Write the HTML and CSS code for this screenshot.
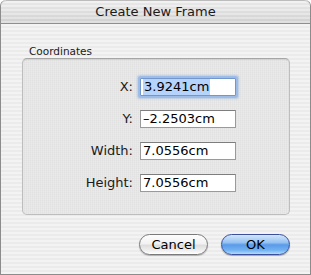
FILE: index.html
```html
<!DOCTYPE html>
<html>
<head>
<meta charset="utf-8">
<link rel="stylesheet" href="styles.css">
</head>
<body>
<div class="window">
  <div class="titlebar">Create New Frame</div>
  <div class="content">
    <div class="group-label">Coordinates</div>
    <div class="groupbox">
      <div class="form">
        <label class="lbl">X:</label>
        <div class="field focused"><span class="sel">3.9241cm</span></div>
        <label class="lbl">Y:</label>
        <div class="field">–2.2503cm</div>
        <label class="lbl">Width:</label>
        <div class="field">7.0556cm</div>
        <label class="lbl">Height:</label>
        <div class="field">7.0556cm</div>
      </div>
    </div>
    <div class="buttons">
      <div class="btn cancel">Cancel</div>
      <div class="btn ok">OK</div>
    </div>
  </div>
</div>
</body>
</html>
```
FILE: styles.css
```css
html, body {
  margin: 0;
  padding: 0;
  background: #ffffff;
}
body {
  font-family: "DejaVu Sans", "Liberation Sans", sans-serif;
  font-size: 13px;
  color: #000;
}
.window {
  width: 311px;
  height: 275px;
  box-sizing: border-box;
  border: 1px solid #8c8c8c;
  border-top: none;
  border-radius: 6px 6px 0 0;
  overflow: hidden;
  background: repeating-linear-gradient(#f3f3f3 0 2px, #ebebeb 2px 4px);
  display: flex;
  flex-direction: column;
}
.titlebar {
  height: 22px;
  line-height: 22px;
  text-align: center;
  font-size: 13px;
  border-top: 1px solid #bcbcbc;
  border-bottom: 1px solid #8e8e8e;
  border-radius: 6px 6px 0 0;
  box-sizing: content-box;
  background:
    repeating-linear-gradient(rgba(255,255,255,0.25) 0 2px, rgba(0,0,0,0.02) 2px 4px),
    linear-gradient(#eeeeee, #d4d4d4);
  color: #1a1a1a;
}
.content {
  flex: 1;
  display: flex;
  flex-direction: column;
  padding-left: 21px;
}
.group-label {
  font-size: 10.5px;
  height: 13px;
  line-height: 13px;
  margin-top: 21px;
  margin-left: 7px;
  color: #1a1a1a;
}
.groupbox {
  width: 268px;
  height: 157px;
  box-sizing: border-box;
  border: 1px solid #bdbdbd;
  border-top-color: #a6a6a6;
  border-radius: 5px;
  background:
    repeating-linear-gradient(90deg, rgba(255,255,255,0.2) 0 1px, transparent 1px 2px),
    repeating-linear-gradient(#e5e5e5 0 1px, #e1e1e1 1px 2px);
  box-shadow: inset 0 1px 1px rgba(0,0,0,0.1);
  padding-top: 19px;
}
.form {
  display: grid;
  grid-template-columns: 110px 96px;
  column-gap: 7px;
  row-gap: 14px;
}
.lbl {
  text-align: right;
  height: 18px;
  line-height: 18px;
  font-size: 13px;
  color: #1a1a1a;
}
.field {
  height: 18px;
  box-sizing: border-box;
  background: #fff;
  border: 1px solid #9a9a9a;
  border-top-color: #7e7e7e;
  padding-left: 2px;
  line-height: 16px;
  font-size: 13px;
  white-space: nowrap;
  overflow: hidden;
}
.field.focused {
  box-shadow: 0 0 0 2px #9dbde8, 0 0 2px 3px rgba(130,170,225,0.45);
  border-color: #7396cc;
  border-radius: 1px;
}
.sel {
  background: #b5d3fb;
  display: inline-block;
  height: 16px;
  padding: 0 1px;
}
.buttons {
  display: flex;
  justify-content: flex-end;
  gap: 13px;
  width: 268px;
  margin-top: 19px;
}
.btn {
  width: 69px;
  height: 21px;
  box-sizing: border-box;
  border-radius: 11px;
  text-align: center;
  line-height: 19px;
  font-size: 13px;
}
.cancel {
  border: 1px solid #7a7a7a;
  background: linear-gradient(#fdfdfd 0%, #f2f2f2 45%, #dedede 55%, #f2f2f2 85%, #ffffff 100%);
  box-shadow: 0 1px 1px rgba(0,0,0,0.25);
}
.ok {
  border: 1px solid #3c4f9c;
  background: linear-gradient(#d2e6fb 0%, #95c2f2 40%, #5a9ae8 52%, #72b2f2 80%, #b2dbfb 100%);
  box-shadow: 0 1px 1px rgba(0,0,0,0.3);
}
```
